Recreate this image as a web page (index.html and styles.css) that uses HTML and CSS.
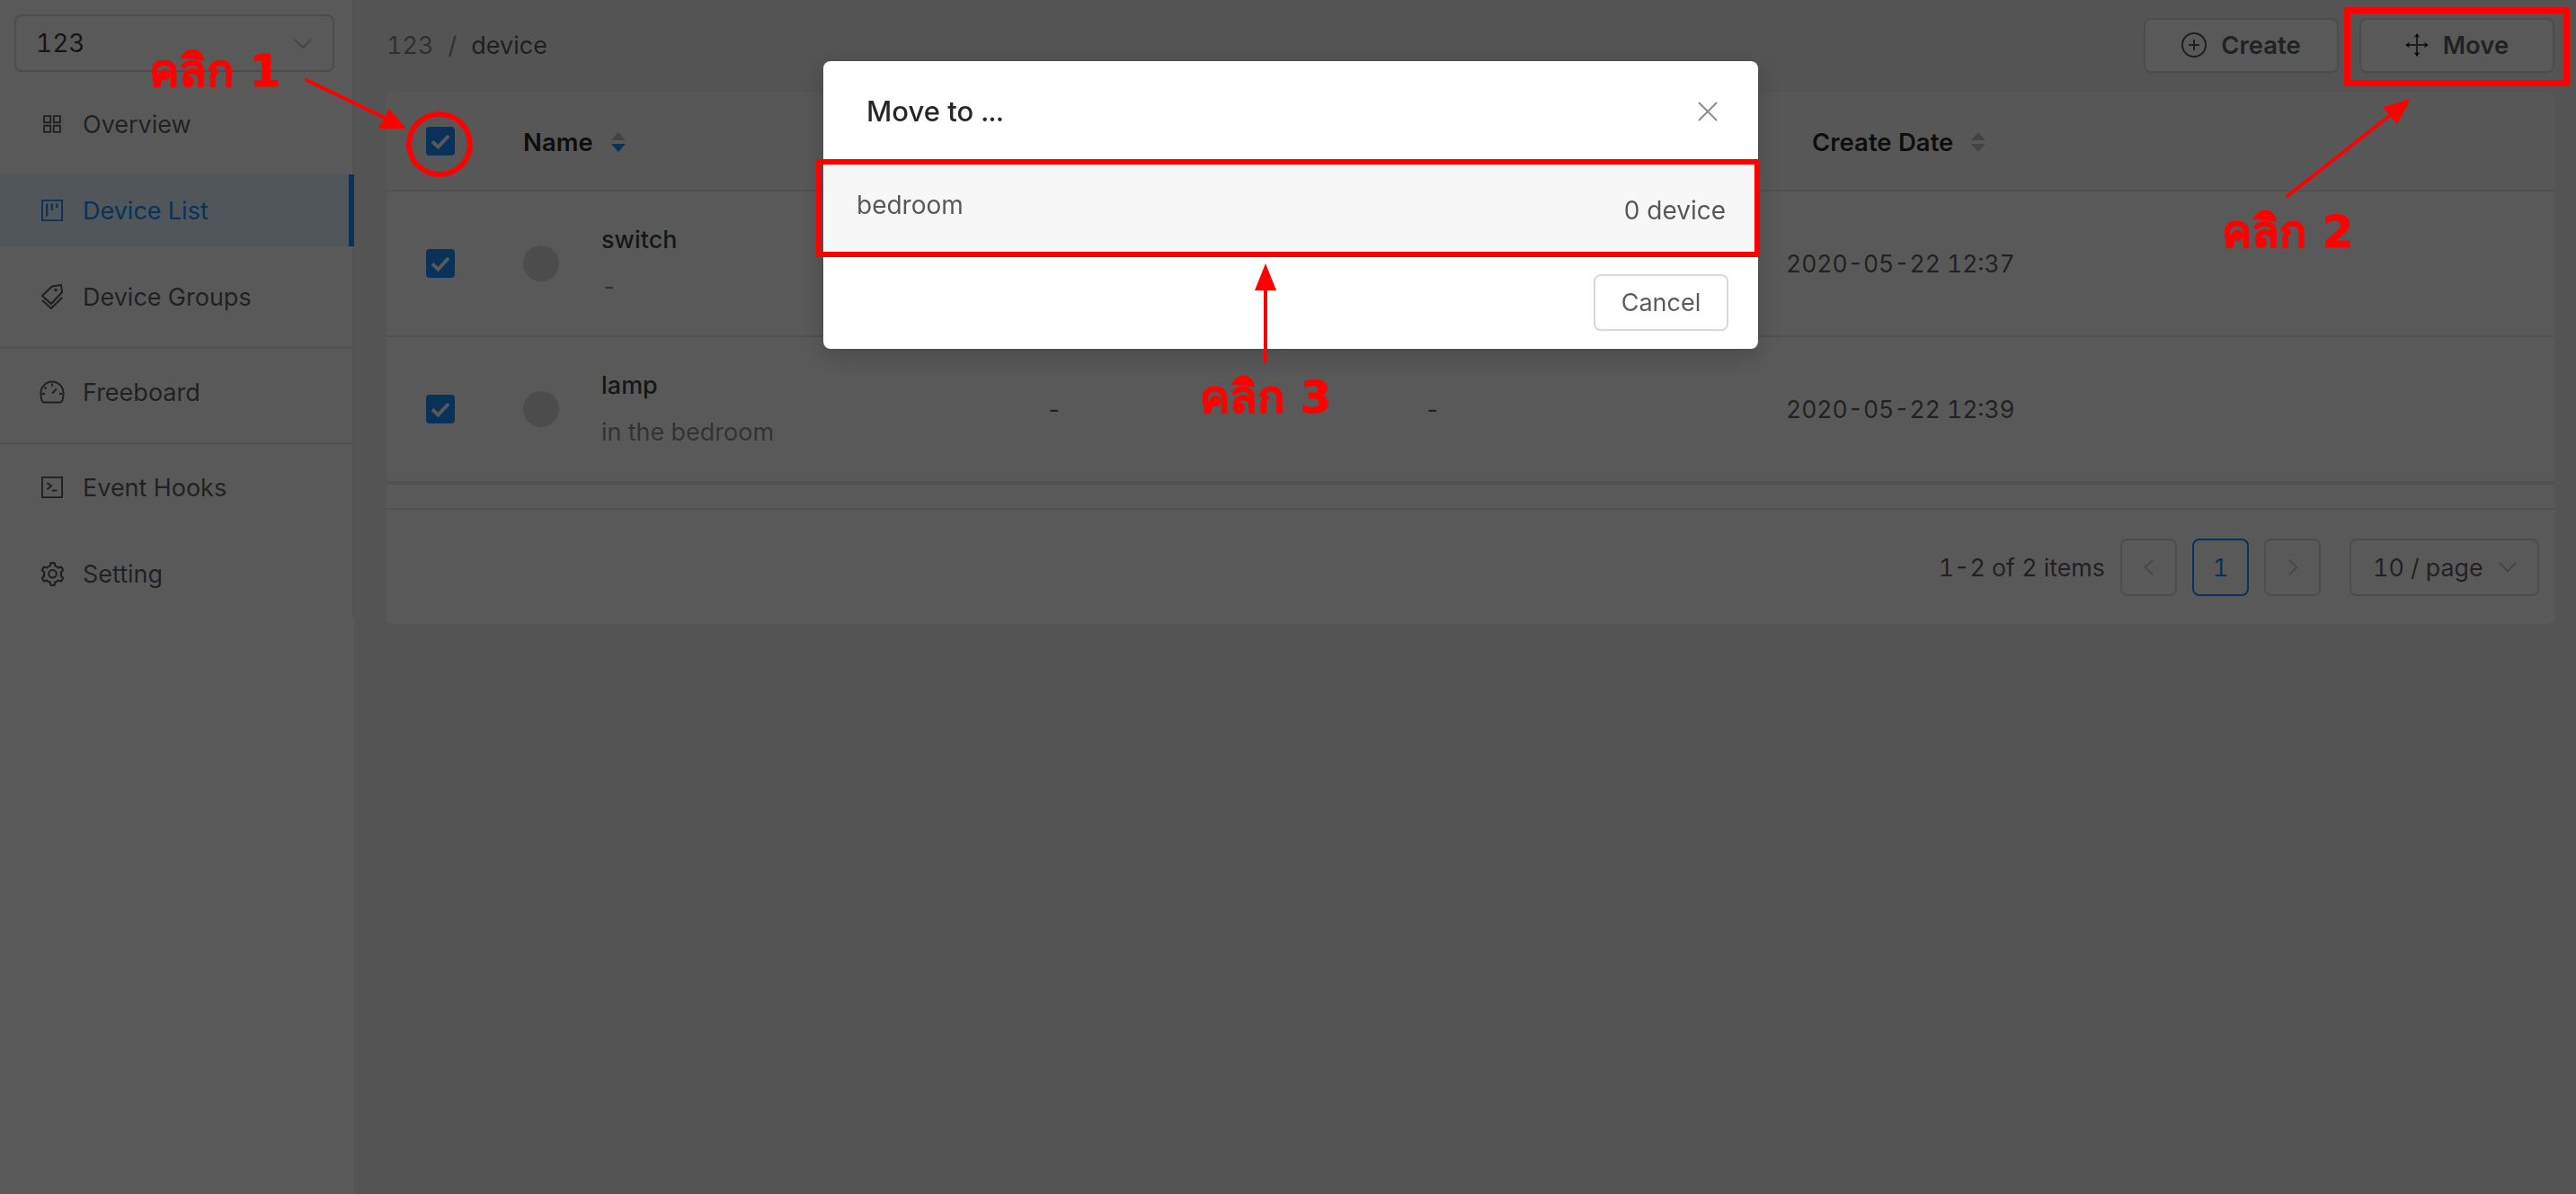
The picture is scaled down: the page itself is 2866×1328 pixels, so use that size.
FILE: index.html
```html
<!DOCTYPE html>
<html lang="en">
<head>
<meta charset="utf-8">
<title>Device List</title>
<link rel="stylesheet" href="styles.css">
</head>
<body>
<div class="app">
  <aside class="sidebar">
    <div class="menu">
      <div class="project-select"><span>123</span>
        <svg class="chev" viewBox="0 0 24 14"><path d="M2 2l10 10L22 2"/></svg>
      </div>
      <nav class="nav">
        <a class="nav-item">
          <svg class="nav-icon" viewBox="64 64 896 896"><path d="M464 144H160c-8.8 0-16 7.2-16 16v304c0 8.8 7.2 16 16 16h304c8.8 0 16-7.2 16-16V160c0-8.8-7.2-16-16-16zm-52 268H212V212h200v200zm452-268H560c-8.8 0-16 7.2-16 16v304c0 8.8 7.2 16 16 16h304c8.8 0 16-7.2 16-16V160c0-8.8-7.2-16-16-16zm-52 268H612V212h200v200zM464 544H160c-8.8 0-16 7.2-16 16v304c0 8.8 7.2 16 16 16h304c8.8 0 16-7.2 16-16V560c0-8.8-7.2-16-16-16zm-52 268H212V612h200v200zm452-268H560c-8.8 0-16 7.2-16 16v304c0 8.8 7.2 16 16 16h304c8.8 0 16-7.2 16-16V560c0-8.8-7.2-16-16-16zm-52 268H612V612h200v200z"/></svg>
          Overview</a>
        <a class="nav-item active">
          <svg class="nav-icon" viewBox="0 0 26 26"><path d="M0 0h26v26H0zM2 2v22h22V2z" fill-rule="evenodd"/><path d="M5.500 5h2.500v15H5.500zM11.500 5h2.500v8h-2.500zM17.500 5H20v5h-2.500z"/></svg>
          Device List</a>
        <a class="nav-item">
          <svg class="nav-icon tag line" viewBox="0 0 24 28"><path d="M12 2.500L22 1l1 8L11 22 1 13z"/><path d="M1 18l10 9 12-12"/><circle cx="16" cy="6.500" r=".8"/></svg>
          Device Groups</a>
        <div class="nav-divider"></div>
        <a class="nav-item">
          <svg class="nav-icon gauge line" viewBox="0 0 28 26"><path d="M5 24.500h18c2 0 3.500-3 3.500-10.500A12.500 12.500 0 0 0 1.500 14C1.500 21.500 3 24.500 5 24.500z"/><path d="M14 14.500l5-5M14 3.500v3M5.500 7.500l2 2M3 15h3M22 15h3"/></svg>
          Freeboard</a>
        <div class="nav-divider"></div>
        <a class="nav-item">
          <svg class="nav-icon line" viewBox="0 0 26 26"><path d="M1 1h24v24H1z"/><path d="M7 7.500l5 4-5 4M13 17h6"/></svg>
          Event Hooks</a>
        <a class="nav-item">
          <svg class="nav-icon gear" viewBox="64 64 896 896"><path d="M924.800 625.700l-65.500-56c3.100-19 4.700-38.400 4.700-57.800s-1.600-38.800-4.700-57.800l65.500-56a32.030 32.030 0 0 0 9.300-35.200l-.9-2.600a443.740 443.740 0 0 0-79.700-137.900l-1.800-2.100a32.120 32.120 0 0 0-35.100-9.500l-81.300 28.900c-30-24.600-63.500-44-99.700-57.600l-15.700-85a32.050 32.050 0 0 0-25.800-25.700l-2.700-.5c-52.100-9.400-106.900-9.400-159 0l-2.700.5a32.050 32.050 0 0 0-25.800 25.700l-15.800 85.400a351.860 351.860 0 0 0-99 57.400l-81.900-29.100a32 32 0 0 0-35.100 9.500l-1.800 2.100a446.020 446.020 0 0 0-79.700 137.900l-.9 2.600c-4.500 12.500-.8 26.500 9.300 35.200l66.300 56.600c-3.100 18.800-4.600 38-4.600 57.100 0 19.200 1.500 38.400 4.600 57.100L99 625.500a32.030 32.030 0 0 0-9.300 35.200l.9 2.600c18.100 50.400 44.900 96.900 79.700 137.900l1.800 2.100a32.120 32.120 0 0 0 35.100 9.500l81.900-29.100c29.800 24.500 63.100 43.900 99 57.400l15.800 85.400a32.050 32.050 0 0 0 25.800 25.700l2.700.5a449.400 449.400 0 0 0 159 0l2.700-.5a32.050 32.050 0 0 0 25.800-25.700l15.700-85a350 350 0 0 0 99.700-57.600l81.300 28.900a32 32 0 0 0 35.100-9.500l1.800-2.100c34.800-41.100 61.600-87.500 79.700-137.900l.9-2.600c4.500-12.300.8-26.300-9.300-35zM788.300 465.900c2.500 15.100 3.800 30.600 3.800 46.100s-1.300 31-3.800 46.100l-6.600 40.100 74.700 63.900a370.030 370.030 0 0 1-42.600 73.600L721 702.800l-31.400 25.800c-23.900 19.600-50.500 35-79.300 45.800l-38.100 14.300-17.900 97a377.500 377.500 0 0 1-85 0l-17.900-97.200-37.800-14.500c-28.500-10.800-55-26.200-78.700-45.700l-31.400-25.900-93.400 33.200c-17-22.900-31.200-47.600-42.600-73.600l75.500-64.500-6.500-40c-2.400-14.900-3.700-30.300-3.700-45.500 0-15.300 1.200-30.600 3.700-45.500l6.500-40-75.500-64.500c11.300-26.100 25.600-50.700 42.600-73.600l93.400 33.200 31.400-25.900c23.700-19.500 50.200-34.900 78.700-45.700l37.900-14.300 17.900-97.200c28.100-3.200 56.800-3.200 85 0l17.900 97 38.100 14.300c28.700 10.800 55.400 26.200 79.300 45.800l31.400 25.800 92.800-32.900c17 22.900 31.200 47.600 42.600 73.600L781.800 426l6.500 39.900zM512 326c-97.200 0-176 78.800-176 176s78.800 176 176 176 176-78.800 176-176-78.800-176-176-176zm79.200 255.200A111.600 111.600 0 0 1 512 614c-29.900 0-58-11.700-79.200-32.800A111.600 111.600 0 0 1 400 502c0-29.900 11.700-58 32.800-79.200C454 401.600 482.100 390 512 390c29.900 0 58 11.600 79.200 32.800A111.600 111.600 0 0 1 624 502c0 29.900-11.700 58-32.800 79.200z"/></svg>
          Setting</a>
      </nav>
    </div>
  </aside>

  <main class="main">
    <header class="topbar">
      <div class="crumbs"><span class="crumb-muted">123</span><span class="crumb-sep">/</span><span>device</span></div>
      <div class="actions">
        <button class="btn">
          <svg class="btn-icon plus line" viewBox="0 0 28 28"><circle cx="14" cy="14" r="13"/><path d="M14 8v12M8 14h12"/></svg>
          Create</button>
        <button class="btn">
          <svg class="btn-icon line" viewBox="0 0 26 26"><path d="M13 1v24M1 13h24"/><path class="solid" d="M13 0l3.500 4.500h-7zM13 26l3.500-4.500h-7zM0 13l4.500-3.500v7zM26 13l-4.500-3.500v7z"/></svg>
          Move</button>
      </div>
    </header>

    <section class="card">
      <div class="thead">
        <span class="cell-check"><span class="checkbox"><svg viewBox="0 0 32 32"><path d="M7 16.500l6.500 6L25 10"/></svg></span></span>
        <span class="th-name">Name
          <span class="sorter"><i class="car-up"></i><i class="car-down"></i></span>
        </span>
        <span class="th-name">Create Date
          <span class="sorter"><i class="car-up"></i><i class="car-down off"></i></span>
        </span>
      </div>

      <div class="row">
        <span class="cell-check"><span class="checkbox"><svg viewBox="0 0 32 32"><path d="M7 16.500l6.500 6L25 10"/></svg></span></span>
        <div class="device"><span class="avatar"></span><div class="device-text"><div class="device-name">switch</div><div class="device-desc">-</div></div></div>
        <span>-</span><span>-</span><span class="date">2020-05-22 12:37</span>
      </div>
      <div class="row">
        <span class="cell-check"><span class="checkbox"><svg viewBox="0 0 32 32"><path d="M7 16.500l6.500 6L25 10"/></svg></span></span>
        <div class="device"><span class="avatar"></span><div class="device-text"><div class="device-name">lamp</div><div class="device-desc">in the bedroom</div></div></div>
        <span>-</span><span>-</span><span class="date">2020-05-22 12:39</span>
      </div>
      <div class="scroll-end"></div>

      <footer class="pager">
        <span class="pager-total">1-2 of 2 items</span>
        <span class="page-box muted"><svg viewBox="0 0 14 24"><path d="M12 2L2 12l10 10"/></svg></span>
        <span class="page-box current">1</span>
        <span class="page-box muted"><svg viewBox="0 0 14 24"><path d="M2 2l10 10L2 22"/></svg></span>
        <span class="page-size">10 / page<svg class="chev small" viewBox="0 0 24 14"><path d="M2 2l10 10L22 2"/></svg></span>
      </footer>
    </section>
  </main>
</div>

<div class="overlay"></div>

<div class="modal">
  <div class="modal-head"><span>Move to ...</span>
    <svg class="close" viewBox="0 0 24 24"><path d="M2 2l20 20M22 2L2 22"/></svg>
  </div>
  <div class="modal-row"><span class="group-name">bedroom</span><span class="group-count">0 device</span></div>
  <div class="modal-foot"><button class="cancel">Cancel</button></div>
</div>

<div class="mark box-move"></div>
<div class="mark box-row"></div>
<div class="mark ring"></div>
<span class="note note-1">คลิก 1</span>
<span class="note note-2">คลิก 2</span>
<span class="note note-3">คลิก 3</span>
<svg class="arrows" viewBox="0 0 2866 1328">
  <path class="shaft" d="M341 89L430 132M2545 218L2662 126M1408 402V320"/>
  <path class="head" d="M452 143L421 143L433 121zM2682 110L2651 119L2667 138zM1408 293L1396 323L1420 323z"/>
</svg>
</body>
</html>
```

FILE: styles.css
```css
* { box-sizing: border-box; }
html, body { margin: 0; height: 100%; overflow: hidden; }
body {
  font-family: Inter, "Liberation Sans", sans-serif;
  font-size: 27px;
  font-variant-numeric: tabular-nums;
  color: rgba(0, 0, 0, .85);
  background: #f0f0f0;
}
svg { display: block; }
.line { fill: none; stroke: currentColor; stroke-width: 2; }

.app { display: flex; height: 1328px; }

/* sidebar */
.sidebar { width: 394px; flex: none; background: #fff; }
.menu { height: 686px; border-right: 2px solid #e8e8e8; padding-top: 16px; }
.project-select {
  display: flex; align-items: center; justify-content: space-between;
  width: 356px; height: 64px; margin-left: 16px; padding: 0 22px 0 22px;
  border: 2px solid #d9d9d9; border-radius: 8px;
  font-size: 28px; color: rgba(0, 0, 0, .75);
}
.chev { width: 22px; height: 13px; fill: none; stroke: #bfbfbf; stroke-width: 2; }
.nav { margin-top: 18px; }
.nav-item {
  display: flex; align-items: center; gap: 22px;
  height: 80px; margin-bottom: 16px; padding-left: 46px;
  color: rgba(0, 0, 0, .65);
}
.nav-icon { width: 24px; height: 24px; flex: none; fill: currentColor; }
.nav-icon.line { fill: none; stroke-width: 2; }
.nav-icon.tag { height: 28px; }
.nav-icon.gauge { width: 28px; height: 26px; margin: 0 -2px; }
.nav-icon.gear { width: 27px; height: 27px; margin: 0 -1.5px; }
.nav-item.active { background: #e6f7ff; color: #1890ff; border-right: 6px solid #1890ff; margin-right: -2px; }
.nav-divider { height: 2px; background: #e8e8e8; margin: 0 0 8px; }

/* main */
.main { flex: 1; padding: 0 24px 0 36px; min-width: 0; }
.topbar { display: flex; align-items: center; justify-content: space-between; height: 103px; padding-bottom: 3px; }
.crumbs { display: flex; gap: 16px; color: rgba(0, 0, 0, .65); }
.crumb-muted, .crumb-sep { color: rgba(0, 0, 0, .45); }
.crumb-muted { font-size: 27px; }
.actions { display: flex; gap: 23px; }
.btn {
  display: flex; align-items: center; justify-content: center; gap: 16px;
  width: 217px; height: 61px;
  font: 600 27.500px Inter, "Liberation Sans", sans-serif; color: rgba(0, 0, 0, .65);
  background: #fff; border: 2px solid #d9d9d9; border-radius: 8px;
  box-shadow: 0 2px 0 rgba(0, 0, 0, .015);
}
.btn-icon { width: 26px; height: 26px; }
.btn-icon.plus { width: 28px; height: 28px; }
.solid { fill: currentColor; stroke: none; }

.card { background: #fff; border-radius: 8px; height: 591px; }
.thead {
  display: grid; grid-template-columns: 152px 1434px 1fr; align-items: center;
  height: 110px; background: #fafafa; border-bottom: 2px solid #e8e8e8;
  border-radius: 8px 8px 0 0; font-weight: 600; font-size: 27.500px;
}
.cell-check { padding-left: 44px; }
.checkbox {
  display: block; width: 32px; height: 32px; border-radius: 4px; background: #1890ff;
}
.checkbox svg { width: 32px; height: 32px; fill: none; stroke: #fff; stroke-width: 4; }
.th-name { display: flex; align-items: center; gap: 20px; padding-top: 2px; }
.sorter { display: flex; flex-direction: column; gap: 4px; }
.car-up, .car-down { display: block; width: 0; height: 0; border-left: 8px solid transparent; border-right: 8px solid transparent; }
.car-up { border-bottom: 9px solid #bfbfbf; }
.car-down { border-top: 9px solid #1890ff; }
.car-down.off { border-top-color: #bfbfbf; }

.row {
  display: grid; grid-template-columns: 152px 582px 421px 402px 1fr; align-items: center;
  height: 162px; border-bottom: 2px solid #e8e8e8; color: rgba(0, 0, 0, .65);
}
.date { font-size: 26.500px; }
.device { display: flex; align-items: center; gap: 47px; }
.avatar { width: 40px; height: 40px; border-radius: 50%; background: #d9d9d9; flex: none; }
.device-name { font-weight: 500; color: rgba(0, 0, 0, .75); line-height: 32px; }
.device-desc { color: rgba(0, 0, 0, .45); line-height: 32px; margin-top: 20px; }
.scroll-end { height: 30px; border-top: 2px solid #e8e8e8; border-bottom: 2px solid #e8e8e8; }
.pager {
  display: flex; align-items: center; justify-content: flex-end; gap: 17px;
  height: 127px; padding-right: 17px; color: rgba(0, 0, 0, .65); font-size: 26.800px;
}
.page-box {
  display: flex; align-items: center; justify-content: center;
  width: 63px; height: 64px; border: 2px solid #d9d9d9; border-radius: 8px;
}
.page-box svg { width: 12px; height: 20px; fill: none; stroke: #bfbfbf; stroke-width: 2; }
.page-box.current { border-color: #1890ff; color: #1890ff; }
.page-size {
  display: flex; align-items: center; justify-content: space-between;
  width: 211px; height: 64px; margin-left: 15px; padding: 0 22px 0 24px;
  border: 2px solid #d9d9d9; border-radius: 8px;
}

/* modal layer */
.overlay { position: fixed; inset: 0; background: rgba(0, 0, 0, .65); }
.modal {
  position: fixed; left: 916px; top: 68px; width: 1040px; height: 320px;
  background: #fff; border-radius: 8px; box-shadow: 0 8px 32px rgba(0, 0, 0, .2);
  display: flex; flex-direction: column;
}
.modal-head {
  display: flex; align-items: center; justify-content: space-between;
  height: 111px; padding: 0 44px 0 48px; font-size: 31px; font-weight: 500; color: rgba(0, 0, 0, .85);
}
.close { width: 24px; height: 24px; fill: none; stroke: rgba(0, 0, 0, .45); stroke-width: 2; }
.modal-row {
  position: relative; height: 101px; padding: 0 36px 0 37px; background: #f7f7f7;
  display: flex; justify-content: space-between; color: rgba(0, 0, 0, .65); font-size: 28px;
}
.group-name { margin-top: 32px; }
.group-count { margin-top: 38px; }
.modal-foot { flex: 1; display: flex; justify-content: flex-end; padding: 25px 33px 0 0; }
.cancel {
  width: 150px; height: 63px; font: 27px Inter, "Liberation Sans", sans-serif;
  color: rgba(0, 0, 0, .65); background: #fff;
  border: 2px solid #d9d9d9; border-radius: 8px; box-shadow: 0 2px 0 rgba(0, 0, 0, .015);
}

/* annotations */
.mark { position: fixed; border: 6px solid #f00; }
.box-move { left: 2608px; top: 8px; width: 251px; height: 88px; border-radius: 2px; border-width: 7px; }
.box-row { left: 908px; top: 177px; width: 1050px; height: 109px; border-radius: 2px; }
.ring { left: 452px; top: 124px; width: 74px; height: 73px; border-radius: 50%; }
.note {
  position: fixed; font: 700 50px "DejaVu Sans", "Noto Sans", sans-serif; color: #f00; line-height: 1; white-space: nowrap;
  -webkit-text-stroke: .8px #f00;
}
.note-1 { left: 166px; top: 54px; }
.note-2 { left: 2472px; top: 233px; }
.note-3 { left: 1335px; top: 417px; }
.arrows { position: fixed; left: 0; top: 0; width: 2866px; height: 1328px; pointer-events: none; }
.shaft { fill: none; stroke: #f00; stroke-width: 4; stroke-linecap: round; }
.head { fill: #f00; }
```
